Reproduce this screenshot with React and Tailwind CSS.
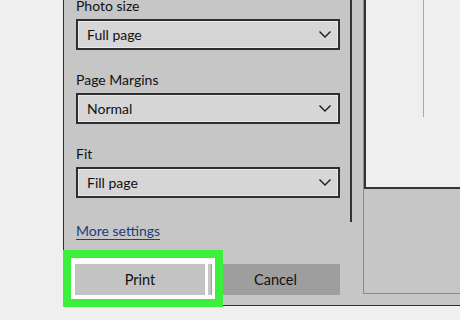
// Print dialog settings column, with the highlighted Print button
function Dropdown({ label, value, first }) {
  return (
    <div className={first ? '-mt-[4px]' : 'mt-[20px]'}>
      <div className="h-[19px] leading-[19px] text-[14px] text-[#111]">{label}</div>
      <div className="mt-[4px] h-[31px] w-[264px] border-2 border-[#2e2e2e] bg-[#d6d6d6] shadow-[inset_0_0_0_1px_#e9e9e9] flex items-center pl-[9px] pr-[7px]">
        <span className="flex-1 text-[14px] text-[#111]">{value}</span>
        <svg width="12" height="7" viewBox="0 0 12 7" fill="none">
          <path d="M0.5 0.5L6 6L11.5 0.5" stroke="#1a1a1a" strokeWidth="1.4" />
        </svg>
      </div>
    </div>
  )
}

export default function App() {
  return (
    <div className="relative w-[460px] h-[320px] overflow-hidden bg-[#efefef] flex font-['Lato',sans-serif]">
      <div className="w-[63px] shrink-0" />

      <div className="flex-1 h-[306px] bg-[#c6c6c6] border-l border-b border-[#2e2e2e] flex">
        {/* settings */}
        <div className="w-[286px] shrink-0 pl-[12px] flex flex-col">
          <Dropdown first label="Photo size" value="Full page" />
          <Dropdown label="Page Margins" value="Normal" />
          <Dropdown label="Fit" value="Fill page" />

          <div className="mt-[23px] h-[19px] leading-[19px] text-[14px] text-[#1d3e7a] underline underline-offset-[3px]">
            More settings
          </div>

          <div className="mt-[24px] -ml-[1px] flex gap-[6px]">
            <div className="w-[130px] h-[31px] bg-[#c3c3c3] flex items-center justify-center text-[14.5px] text-[#111]">
              Print
            </div>
            <div className="w-[129px] h-[31px] bg-[#9e9e9e] flex items-center justify-center text-[14.5px] text-[#111]">
              Cancel
            </div>
          </div>
        </div>

        {/* scrollbar thumb */}
        <div className="w-[2px] h-[222px] bg-[#333]" />
        <div className="w-[11px] shrink-0" />

        {/* preview */}
        <div className="flex-1 h-[294px] border-l border-b border-[#8a8a8a] flex flex-col">
          <div className="h-[189px] bg-[#efefef] border-l-2 border-b-2 border-[#333] flex">
            <div className="w-[57px]" />
            <div className="w-[1px] h-[117px] bg-[#a8a8a8]" />
          </div>
        </div>
      </div>

      {/* focus ring + highlight */}
      <div className="absolute left-[71px] top-[258px] w-[144px] h-[41px] border-white border-l-[4px] border-t-[6px] border-b-[4px] border-r-[3px]" />
      <div className="absolute left-[205px] top-[264px] w-[3px] h-[31px] bg-white" />
      <div className="absolute left-[63px] top-[250px] w-[160px] h-[57px] border-[8px] border-[#3cef3c]" />
    </div>
  )
}
